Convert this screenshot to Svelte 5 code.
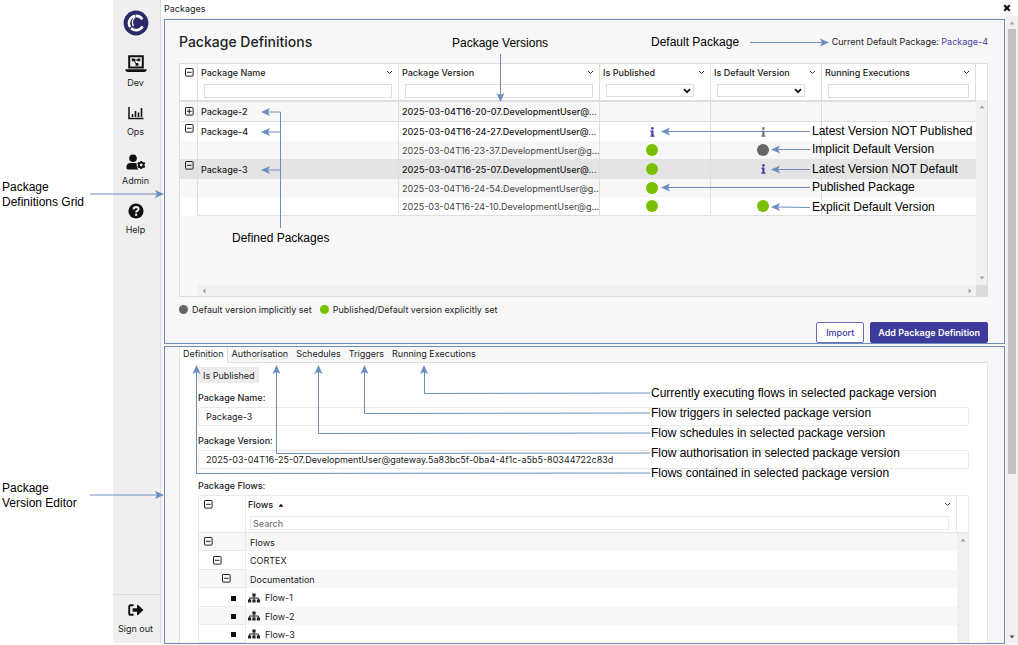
<script>
  const navItems = [
    { id: 'dev', label: 'Dev' },
    { id: 'ops', label: 'Ops' },
    { id: 'admin', label: 'Admin' },
    { id: 'help', label: 'Help' }
  ];

  const columns = [
    { label: 'Package Name', width: 'auto', filter: 'text' },
    { label: 'Package Version', width: 'auto', filter: 'text' },
    { label: 'Is Published', width: '111px', filter: 'select' },
    { label: 'Is Default Version', width: '111px', filter: 'select' },
    { label: 'Running Executions', width: '154px', filter: 'text' }
  ];

  const rows = [
    { kind: 'collapsed', toggle: 'plus', name: 'Package-2', version: '2025-03-04T16-20-07.DevelopmentUser@…' },
    { kind: 'latest', toggle: 'minus', name: 'Package-4', version: '2025-03-04T16-24-27.DevelopmentUser@…', published: 'info', isDefault: 'info-grey' },
    { kind: 'child', version: '2025-03-04T16-23-37.DevelopmentUser@g…', published: 'green', isDefault: 'grey' },
    { kind: 'latest selected', toggle: 'minus', name: 'Package-3', version: '2025-03-04T16-25-07.DevelopmentUser@…', published: 'green', isDefault: 'info' },
    { kind: 'child', version: '2025-03-04T16-24-54.DevelopmentUser@g…', published: 'green' },
    { kind: 'child plain', version: '2025-03-04T16-24-10.DevelopmentUser@g…', published: 'green', isDefault: 'green' }
  ];

  const tabs = ['Definition', 'Authorisation', 'Schedules', 'Triggers', 'Running Executions'];
  let activeTab = $state('Definition');

  const flows = [
    { level: 0, label: 'Flows' },
    { level: 1, label: 'CORTEX' },
    { level: 2, label: 'Documentation' },
    { level: 3, label: 'Flow-1', leaf: true },
    { level: 3, label: 'Flow-2', leaf: true },
    { level: 3, label: 'Flow-3', leaf: true }
  ];

  // Callout labels: left edge and vertical centre of the first line.
  const callouts = [
    { x: 452, y: 43, text: 'Package Versions' },
    { x: 651, y: 42, text: 'Default Package' },
    { x: 812, y: 131, text: 'Latest Version NOT Published' },
    { x: 812, y: 149, text: 'Implicit Default Version' },
    { x: 812, y: 169, text: 'Latest Version NOT Default' },
    { x: 812, y: 187, text: 'Published Package' },
    { x: 812, y: 207, text: 'Explicit Default Version' },
    { x: 232, y: 238, text: 'Defined Packages' },
    { x: 2, y: 187, text: 'Package\nDefinitions Grid' },
    { x: 2, y: 488, text: 'Package\nVersion Editor' },
    { x: 651, y: 393, text: 'Currently executing flows in selected package version' },
    { x: 651, y: 413, text: 'Flow triggers in selected package version' },
    { x: 651, y: 433, text: 'Flow schedules in selected package version' },
    { x: 651, y: 453, text: 'Flow authorisation in selected package version' },
    { x: 651, y: 473, text: 'Flows contained in selected package version' }
  ];

  const connectors = [
    'M500.5 54V96',
    'M750 42.5H823',
    'M280.5 228V112H267',
    'M280.5 132H267',
    'M280.5 170H267',
    'M810 131.5H667',
    'M810 149.5H777',
    'M810 169.5H777',
    'M810 187.5H667',
    'M810 207.5L777 207',
    'M90 194H158',
    'M90 495H158',
    'M650 393L424.5 393.5V371',
    'M650 413L364.5 413.5V371',
    'M650 433L318.5 433.5V371',
    'M650 453L276.5 453.5V371',
    'M650 473L196.5 473.5V371'
  ];

  // Arrow heads: tip position and rotation from pointing right.
  const heads = [
    [500.5, 102, 90], [829, 42.5, 0],
    [261, 112, 180], [261, 132, 180], [261, 170, 180],
    [661, 131.5, 180], [771, 149.5, 180], [771, 169.5, 180], [661, 187.5, 180], [771, 207, 180],
    [164, 194, 0], [164, 495, 0],
    [424, 365, 270], [364.5, 365, 270], [318.5, 365, 270], [276.5, 365, 270], [196.5, 365, 270]
  ];
</script>

{#snippet box(plus)}
  <svg class="box" viewBox="0 0 9 9" width="9" height="9" aria-hidden="true">
    <rect x="0.5" y="0.5" width="7.6" height="7.6" rx="0.6" fill="none" stroke="currentColor" />
    <path d={plus ? 'M2 4.3H6.6M4.3 2V6.6' : 'M2 4.3H6.6'} stroke="currentColor" fill="none" />
  </svg>
{/snippet}

{#snippet chevron()}
  <svg viewBox="0 0 7 5" width="7" height="5" aria-hidden="true"><path d="M1 1L3.5 3.5L6 1" fill="none" stroke="#333" /></svg>
{/snippet}

{#snippet arrow(dir)}
  <svg class="arrow {dir}" viewBox="0 0 6 4" width="6" height="4" aria-hidden="true"><path d="M0.5 3.5L3 0.5L5.5 3.5Z" fill="currentColor" /></svg>
{/snippet}

{#snippet status(kind)}
  {#if kind === 'green' || kind === 'grey'}
    <span class="dot {kind}"></span>
  {:else if kind}
    <svg class="info" class:muted={kind === 'info-grey'} viewBox="0 0 5 10" width="5" height="10" aria-hidden="true">
      <circle cx="2.4" cy="1.4" r="1.3" fill="currentColor" />
      <path d="M0.4 3.6H3.5V8.4H4.6V9.8H0.3V8.4H1.3V5H0.4Z" fill="currentColor" />
    </svg>
  {/if}
{/snippet}

<div class="page">
  <div class="margin"></div>

  <nav class="sidebar">
    <a class="logo" href="#home" aria-label="Home">
      <svg viewBox="0 0 26 26" width="26" height="26" aria-hidden="true">
        <circle cx="13" cy="13" r="12.4" fill="#2b2a68" />
        <path d="M12 5.9A7.3 7.3 0 0 0 7.2 17.2" fill="none" stroke="#fff" stroke-width="2.4" />
        <path d="M12.6 5.9A7.3 7.3 0 0 1 19.3 9.4" fill="none" stroke="#fff" stroke-width="2.6" />
        <path d="M8.2 18.2A7.3 7.3 0 0 0 19.6 16.4" fill="none" stroke="#fff" stroke-width="2.6" />
        <path d="M12.4 7.2C9.2 8.6 8.6 12.6 10.4 16.2" fill="none" stroke="#fff" stroke-width="1.2" />
      </svg>
    </a>
    {#each navItems as item}
      <a class="nav-item" href="#{item.id}">
        <span class="nav-icon">
          {#if item.id === 'dev'}
            <svg viewBox="0 0 22 18" width="22" height="18" aria-hidden="true">
              <path d="M4.2 12.5V1.2H17.8V12.5Z" fill="none" stroke="#111" stroke-width="2" />
              <path d="M0.5 14.2H21.5V15.2Q21.3 17 19.5 17H2.5Q0.7 17 0.5 15.2Z" fill="#111" />
              <path d="M8.5 5H13.5M8.5 5L12 9.6" stroke="#111" fill="none" />
              <path d="M6.8 3.4H9.6V6.2H6.8ZM12.4 3.4H15.2V6.2H12.4ZM10.6 8H13.4V10.8H10.6Z" fill="#111" />
            </svg>
          {:else if item.id === 'ops'}
            <svg viewBox="0 0 16 14" width="16" height="14" aria-hidden="true">
              <path d="M1 1V12.5H15.5" fill="none" stroke="#111" stroke-width="1.5" />
              <path d="M4.5 8V11M7.5 5V11M10.5 6.5V11M13.5 2V11" stroke="#111" stroke-width="1.6" />
            </svg>
          {:else if item.id === 'admin'}
            <svg viewBox="0 0 20 16" width="20" height="16" aria-hidden="true">
              <circle cx="7" cy="4.2" r="3.8" fill="#111" />
              <path d="M0.4 13.8Q0.2 9 4.6 8.9H9.4Q10.3 9 10.8 9.4Q10 12.8 12.6 15.4H1.8Q0.5 15.3 0.4 13.8Z" fill="#111" />
              <circle cx="15.2" cy="11" r="2.4" fill="none" stroke="#111" stroke-width="1.9" />
              <path d="M15.2 6.9V8.5M15.2 13.5V15.1M11.6 8.9L13 9.7M17.4 12.3L18.8 13.1M11.6 13.1L13 12.3M17.4 9.7L18.8 8.9" stroke="#111" stroke-width="1.8" />
            </svg>
          {:else}
            <svg viewBox="0 0 16 16" width="16" height="16" aria-hidden="true">
              <circle cx="8" cy="8" r="7.6" fill="#111" />
              <path d="M5.4 6.3Q5.8 4 8.1 4Q10.6 4.1 10.6 6.1Q10.5 7.2 9.2 7.8Q8.1 8.4 8.1 9.5" fill="none" stroke="#efefef" stroke-width="1.9" />
              <circle cx="8.1" cy="11.8" r="1.2" fill="#efefef" />
            </svg>
          {/if}
        </span>
        <span class="nav-label">{item.label}</span>
      </a>
    {/each}
    <a class="nav-item sign-out" href="#signout">
      <span class="nav-icon">
        <svg viewBox="0 0 16 12" width="16" height="12" aria-hidden="true">
          <path d="M5.6 1.2H2.8Q1.2 1.2 1.2 2.8V9.2Q1.2 10.8 2.8 10.8H5.6" fill="none" stroke="#111" stroke-width="1.9" />
          <path d="M4.6 4.2H9V1.4Q9.2 0.3 10.1 1L15 5.4Q15.5 6 15 6.6L10.1 11Q9.2 11.7 9 10.6V7.8H4.6Z" fill="#111" />
        </svg>
      </span>
      <span class="nav-label">Sign out</span>
    </a>
  </nav>

  <main>
    <header class="topbar">
      <span>Packages</span>
      <button class="bare close" aria-label="Close">
        <svg viewBox="0 0 8 8" width="8" height="8" aria-hidden="true"><path d="M1.2 1.2L6.8 6.8M6.8 1.2L1.2 6.8" stroke="#111" stroke-width="2.2" /></svg>
      </button>
    </header>

    <div class="body">
      <div class="panels">
        <section class="panel definitions">
          <div class="title-row">
            <h1>Package Definitions</h1>
            <p>Current Default Package: <a href="#package-4">Package-4</a></p>
          </div>

          <div class="grid">
            <div class="grid-main">
              <table>
                <colgroup>
                  <col style="width: 18px" />
                  {#each columns as col}<col style="width: {col.width}" />{/each}
                </colgroup>
                <thead>
                  <tr>
                    <th class="toggle-cell"><button class="bare head-toggle" aria-label="Collapse all packages">{@render box(false)}</button></th>
                    {#each columns as col}
                      <th>
                        <div class="th-label"><span>{col.label}</span><button class="bare" aria-label="{col.label} menu">{@render chevron()}</button></div>
                        {#if col.filter === 'select'}
                          <div class="select-wrap">
                            <select aria-label="Filter {col.label}"><option></option></select>
                            <svg viewBox="0 0 8 6" width="8" height="6" aria-hidden="true"><path d="M1 1.2L4 4.2L7 1.2" fill="none" stroke="#111" stroke-width="1.7" /></svg>
                          </div>
                        {:else}
                          <input class="filter" type="text" aria-label="Filter {col.label}" />
                        {/if}
                      </th>
                    {/each}
                  </tr>
                </thead>
                <tbody>
                  {#each rows as row}
                    <tr class={row.kind}>
                      <td class="toggle-cell">
                        {#if row.toggle}<button class="bare" aria-label="Toggle {row.name}">{@render box(row.toggle === 'plus')}</button>{/if}
                      </td>
                      <td>{row.name ?? ''}</td>
                      <td class="version">{row.version}</td>
                      <td class="state">{@render status(row.published)}</td>
                      <td class="state">{@render status(row.isDefault)}</td>
                      <td class="last"></td>
                    </tr>
                  {/each}
                </tbody>
              </table>
            </div>
            <div class="vbar"><div class="vbar-head"></div><div class="track">{@render arrow('up')}{@render arrow('down')}</div></div>
            <div class="hbar">{@render arrow('left')}{@render arrow('right')}</div>
            <div class="corner"></div>
          </div>

          <div class="legend">
            <span class="dot grey small"></span><span>Default version implicitly set</span>
            <span class="dot green small"></span><span>Published/Default version explicitly set</span>
          </div>

          <div class="actions">
            <button class="btn">Import</button>
            <button class="btn primary">Add Package Definition</button>
          </div>
        </section>

        <section class="panel editor">
          <div class="tabs" role="tablist">
            {#each tabs as tab}
              <button class="tab" class:active={activeTab === tab} role="tab" aria-selected={activeTab === tab} onclick={() => (activeTab = tab)}>{tab}</button>
            {/each}
          </div>
          <div class="pane">
            <span class="chip">Is Published</span>
            <label for="pkg-name">Package Name:</label>
            <input id="pkg-name" class="field" type="text" value="Package-3" readonly />
            <label for="pkg-version">Package Version:</label>
            <input id="pkg-version" class="field" type="text" value="2025-03-04T16-25-07.DevelopmentUser@gateway.5a83bc5f-0ba4-4f1c-a5b5-80344722c83d" readonly />
            <label class="flows-label" for="flow-search">Package Flows:</label>
            <div class="flow-grid">
              <table>
                <colgroup><col style="width: 47px" /><col /></colgroup>
                <thead>
                  <tr>
                    <th class="tree"><button class="bare head-toggle" aria-label="Collapse all flows">{@render box(false)}</button></th>
                    <th>
                      <div class="th-label">
                        <span>Flows <svg class="sort" viewBox="0 0 6 4" width="6" height="4" aria-hidden="true"><path d="M0.5 3.7L3 0.7L5.5 3.7Z" fill="#111" /></svg></span>
                        <button class="bare" aria-label="Flows menu">{@render chevron()}</button>
                      </div>
                      <input id="flow-search" class="filter search" type="text" placeholder="Search" />
                    </th>
                  </tr>
                </thead>
                <tbody>
                  {#each flows as flow}
                    <tr>
                      <td class="tree">
                        <div class="indent" style="padding-left: {flow.level * 9 + 5}px">
                          {#if flow.leaf}<i class="leaf"></i>{:else}<button class="bare" aria-label="Toggle {flow.label}">{@render box(false)}</button>{/if}
                        </div>
                      </td>
                      <td>
                        <div class="flow-name" class:leafy={flow.leaf}>
                          {#if flow.leaf}
                            <svg viewBox="0 0 12 10" width="12" height="10" aria-hidden="true">
                              <path d="M4.4 0.4H7.6V3.4H4.4ZM0 6.6H3.2V9.6H0ZM4.4 6.6H7.6V9.6H4.4ZM8.8 6.6H12V9.6H8.8Z" fill="#222" />
                              <path d="M6 3V7M1.6 7V5H10.4V7" fill="none" stroke="#222" />
                            </svg>
                          {/if}
                          <span>{flow.label}</span>
                        </div>
                      </td>
                    </tr>
                  {/each}
                </tbody>
              </table>
              <div class="vbar"><div class="vbar-head"></div><div class="track">{@render arrow('up')}</div></div>
            </div>
          </div>
        </section>
      </div>
      <div class="page-bar">{@render arrow('up')}<div class="thumb"></div>{@render arrow('down dark')}</div>
    </div>
  </main>

  <div class="callouts">
    <svg viewBox="0 0 1018 645" width="1018" height="645" aria-hidden="true">
      {#each connectors as d}<path {d} fill="none" stroke="#6c8ebf" />{/each}
      {#each heads as [x, y, r]}<path d="M0 0L-9 -4L-7 0L-9 4Z" fill="#6c8ebf" transform="translate({x} {y}) rotate({r})" />{/each}
    </svg>
    {#each callouts as c}
      <span style="left: {c.x}px; top: {c.y - 7}px">{c.text}</span>
    {/each}
  </div>
</div>

<style>
  :global(body) {
    margin: 0;
    background: #fff;
  }
  * {
    box-sizing: border-box;
  }
  .page {
    position: relative;
    display: flex;
    min-height: 100vh;
    overflow: hidden;
    font: 9px/13px Inter, sans-serif;
    color: #222;
  }
  a {
    color: inherit;
    text-decoration: none;
  }
  svg {
    display: block;
    flex: none;
  }
  button,
  input,
  select {
    font: inherit;
    color: inherit;
    margin: 0;
  }
  .bare {
    display: block;
    padding: 0;
    border: 0;
    background: none;
  }
  .margin {
    flex: 0 0 113px;
  }
  .sidebar {
    display: flex;
    flex-direction: column;
    flex: 0 0 48px;
    margin-bottom: 2px;
    padding-right: 2px;
    background: #efefef;
    border-right: 1px solid #dcdcdc;
  }
  .logo {
    display: flex;
    justify-content: center;
    height: 52px;
    padding-top: 10px;
  }
  .nav-item {
    display: flex;
    flex-direction: column;
    align-items: center;
    height: 49px;
    white-space: nowrap;
  }
  .nav-icon {
    display: flex;
    align-items: center;
    height: 24px;
  }
  .sign-out {
    margin-top: auto;
    margin-right: -2px;
    padding: 3px 2px 0 0;
    border-top: 1px solid #dcdcdc;
  }
  main {
    display: flex;
    flex-direction: column;
    flex: 1;
    min-width: 0;
  }
  .topbar {
    display: flex;
    align-items: center;
    justify-content: space-between;
    height: 16px;
    padding: 0 7px 0 3px;
  }
  .body {
    display: flex;
    flex: 1;
    background: #f7f7f7;
  }
  .panels {
    display: flex;
    flex-direction: column;
    flex: 1;
    gap: 2px;
    min-width: 0;
    padding: 3px 1px 1px 3px;
  }
  .panel {
    border: 1px solid #6c8ebf;
    padding: 0 16px 0 14px;
  }
  .page-bar {
    display: flex;
    flex-direction: column;
    align-items: center;
    flex: 0 0 12px;
    margin-bottom: 2px;
    padding: 5px 0 4px;
    background: #f1f1f1;
    color: #a3a3a3;
  }
  .thumb {
    width: 8px;
    height: 72%;
    margin: 4px 0 auto;
    background: #c1c1c1;
  }
  .arrow.down {
    transform: rotate(180deg);
  }
  .arrow.left {
    transform: rotate(-90deg);
  }
  .arrow.right {
    transform: rotate(90deg);
  }
  .arrow.dark {
    color: #505050;
  }
  .title-row {
    display: flex;
    align-items: center;
    justify-content: space-between;
    height: 43px;
  }
  h1 {
    margin: 0;
    font-size: 14px;
    font-weight: 500;
    line-height: 20px;
  }
  p {
    margin: 0;
  }
  p a {
    color: #4541a0;
  }
  .grid {
    display: grid;
    grid-template-columns: minmax(0, 1fr) 11px;
    grid-template-rows: minmax(221px, auto) 11px;
    border: 1px solid #dedede;
  }
  table {
    width: 100%;
    table-layout: fixed;
    border-spacing: 0;
  }
  th,
  td {
    padding: 0;
    text-align: left;
    font-weight: 400;
    white-space: nowrap;
  }
  th {
    vertical-align: top;
    height: 38px;
    background: #fff;
    border-right: 1px solid #dedede;
    border-bottom: 2px solid #dedede;
    font-weight: 500;
  }
  .th-label {
    display: flex;
    align-items: center;
    justify-content: space-between;
    height: 17px;
    padding: 0 5px 0 3px;
  }
  .head-toggle {
    margin: 4px auto 0 5px;
  }
  .filter {
    display: block;
    width: calc(100% - 12px);
    height: 14px;
    margin: 3px 6px 0;
    padding: 0 2px;
    background: #fff;
    border: 1px solid #dedede;
    outline: 0;
  }
  .select-wrap {
    position: relative;
    margin: 3px 16px 0 6px;
  }
  .select-wrap svg {
    position: absolute;
    right: 3px;
    top: 4px;
    pointer-events: none;
  }
  select {
    display: block;
    width: 100%;
    height: 13px;
    padding: 0;
    appearance: none;
    background: #fff;
    border: 1px solid #dedede;
    border-radius: 0;
  }
  .grid td {
    height: 18px;
    padding-left: 3px;
    border-right: 1px solid #dedede;
    line-height: 13px;
  }
  .grid td.toggle-cell {
    padding-left: 5px;
  }
  .grid td.last {
    border-right: 0;
  }
  .collapsed td {
    height: 20px;
    border-bottom: 1px solid #dedede;
  }
  .latest td {
    height: 19px;
    background: #fff;
  }
  .latest .toggle-cell {
    vertical-align: top;
    padding-top: 2px;
  }
  .selected td {
    height: 20px;
    background: #e4e4e4;
  }
  .collapsed td,
  .latest td {
    font-weight: 500;
  }
  .child td {
    color: #444;
  }
  .plain td {
    height: 19px;
    background: #fff;
    border-bottom: 1px solid #dedede;
  }
  .plain .toggle-cell {
    border-bottom-color: #fff;
  }
  .version {
    overflow: hidden;
  }
  .grid td.state {
    padding: 0;
  }
  .dot {
    display: block;
    width: 12px;
    height: 12px;
    border-radius: 50%;
  }
  .dot.green {
    background: #78c000;
  }
  .dot.grey {
    background: #666;
  }
  .dot.small {
    width: 9px;
    height: 9px;
  }
  .grid td.state {
    padding-right: 6px;
  }
  .state .dot,
  .info {
    margin: 0 auto;
  }
  .info {
    color: #433fa3;
  }
  .info.muted {
    color: #777;
  }
  .vbar {
    display: flex;
    flex-direction: column;
  }
  .vbar-head {
    height: 36px;
    background: #fff;
  }
  .track {
    display: flex;
    flex-direction: column;
    align-items: center;
    justify-content: space-between;
    flex: 1;
    padding: 5px 0;
    background: #f0f0f0;
    color: #a3a3a3;
  }
  .hbar {
    display: flex;
    align-items: center;
    justify-content: space-between;
    margin-left: 18px;
    padding: 0 3px;
    background: #f0f0f0;
    color: #a3a3a3;
  }
  .corner {
    background: #dcdcdc;
  }
  .legend {
    display: flex;
    align-items: center;
    gap: 4px;
    height: 25px;
  }
  .legend .green {
    margin-left: 4px;
  }
  .actions {
    display: flex;
    justify-content: flex-end;
    gap: 6px;
  }
  .btn {
    height: 21px;
    padding: 0 9px 1px;
    border: 1px solid #6f6cba;
    border-radius: 2px;
    background: #fff;
    color: #403c9c;
    font-weight: 500;
  }
  .btn.primary {
    padding: 0 7px 1px;
    background: #3d3a9b;
    border-color: #3d3a9b;
    color: #fff;
    font-weight: 600;
  }
  .editor {
    flex: 1;
  }
  .tabs {
    display: flex;
    height: 16px;
    border-left: 1px solid #dedede;
    box-shadow: inset 0 -1px #dedede;
  }
  .tab {
    padding: 0 4px 3px;
    border: 0;
    background: none;
    line-height: 13px;
  }
  .tab.active {
    padding-left: 3px;
    padding-right: 3px;
    background: #fff;
    border-right: 1px solid #dedede;
  }
  .pane {
    display: flex;
    flex-direction: column;
    align-items: stretch;
    padding: 4px 18px 0;
    background: #fff;
    border: solid #e4e4e4;
    border-width: 0 1px;
  }
  .chip {
    align-self: flex-start;
    padding: 1px 5px 0;
    background: #ececec;
    line-height: 15px;
  }
  label {
    padding-top: 5px;
    font-weight: 500;
    line-height: 19px;
  }
  .flows-label {
    margin: 2px 0 0;
  }
  .field {
    height: 19px;
    padding: 0 7px;
    background: #fff;
    border: 1px solid #e8e8e8;
    border-radius: 2px;
    outline: 0;
  }
  .flow-grid {
    display: grid;
    grid-template-columns: minmax(0, 1fr) 11px;
    border: solid #e8e8e8;
    border-width: 1px 1px 0;
  }
  .flow-grid th {
    height: 37px;
    border-color: #e8e8e8;
    border-bottom-width: 1px;
  }
  .flow-grid .th-label {
    padding-left: 2px;
  }
  .flow-grid .filter {
    width: calc(100% - 11px);
    margin-left: 4px;
    border-color: #ececec;
  }
  .search::placeholder {
    color: #777;
  }
  .sort {
    display: inline-block;
    margin-left: 2px;
    vertical-align: 1px;
  }
  .flow-grid tr {
    background: #fff;
  }
  .flow-grid tbody tr:nth-child(odd) {
    background: #f7f7f7;
  }
  .flow-grid td {
    height: 18px;
  }
  .flow-grid tr:nth-child(2) td,
  .flow-grid tr:nth-child(4) td {
    height: 19px;
  }
  td.tree {
    border-right: 1px solid #e8e8e8;
    border-bottom: 1px solid #e8e8e8;
  }
  .leaf {
    display: block;
    width: 5px;
    height: 5px;
    margin: 2px 0 0;
    background: #111;
  }
  .flow-name {
    display: flex;
    align-items: center;
    gap: 5px;
    padding-left: 4px;
  }
  .flow-name.leafy {
    padding-left: 2px;
  }
  .flow-grid .vbar-head {
    height: 37px;
    border-bottom: 1px solid #e8e8e8;
  }
  .callouts {
    position: absolute;
    top: 0;
    left: 0;
    pointer-events: none;
    font: 12px/15px 'Liberation Sans', Arial, sans-serif;
    color: #000;
  }
  .callouts span {
    position: absolute;
    white-space: pre;
  }
</style>
